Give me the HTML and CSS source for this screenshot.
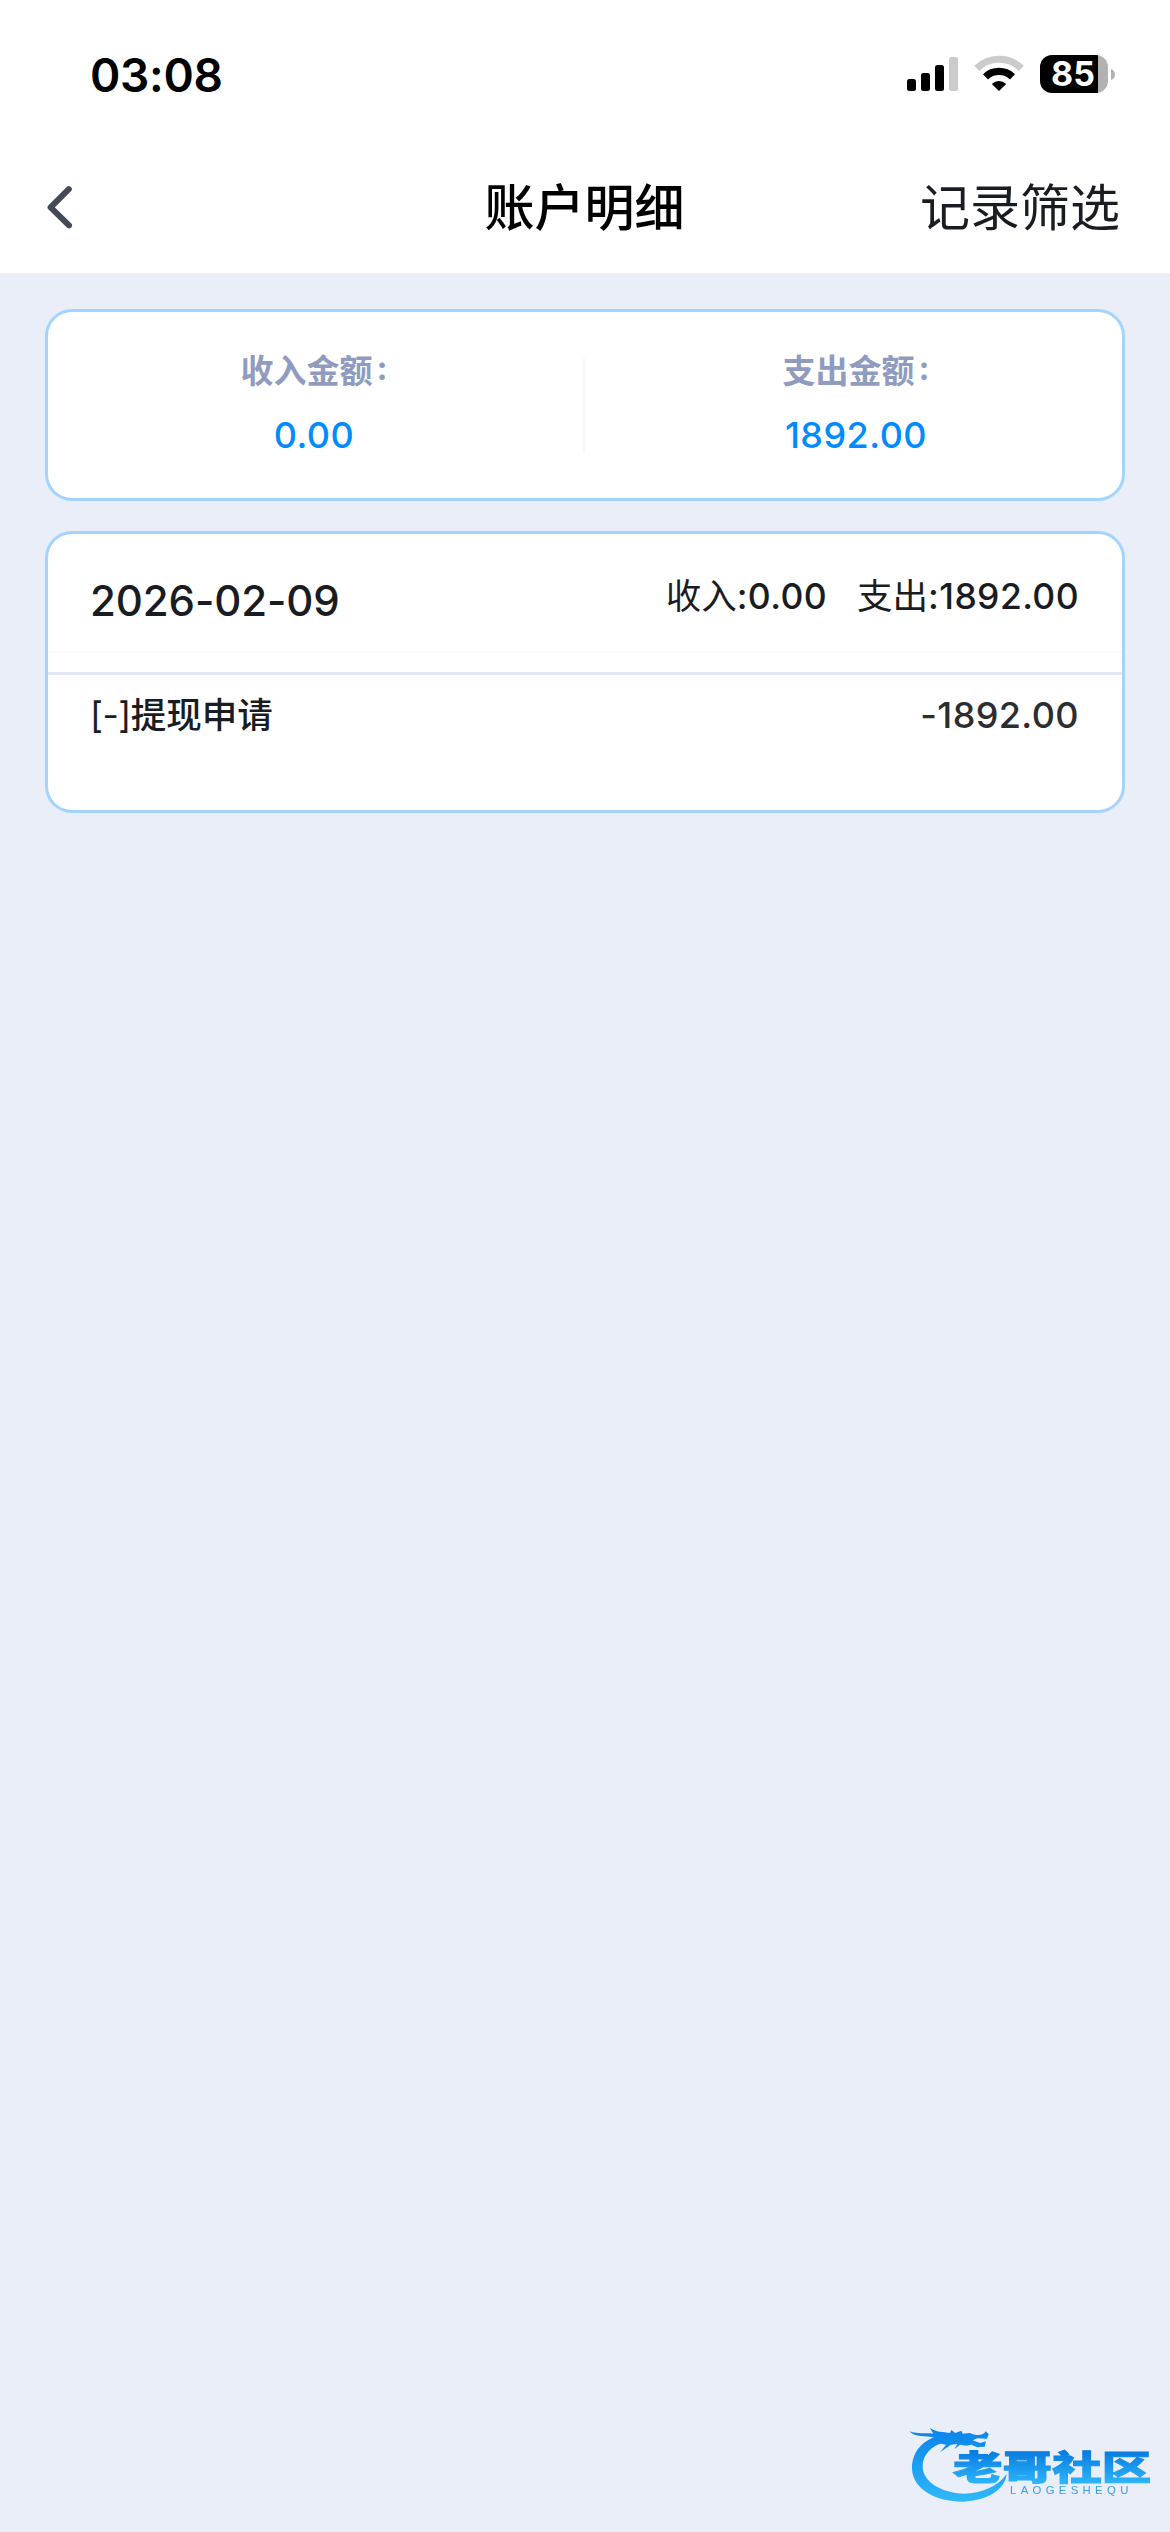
FILE: index.html
```html
<!DOCTYPE html>
<html lang="zh-CN">
<head>
<meta charset="utf-8">
<title>账户明细</title>
<link rel="stylesheet" href="styles.css">
</head>
<body>
<div class="status-bar">
  <span class="clock">03:08</span>
  <div class="status-icons">
    <svg width="52" height="36" viewBox="0 0 52 36">
      <rect x="0" y="24" width="9" height="12" rx="2.5"/>
      <rect x="14" y="18" width="9" height="18" rx="2.5"/>
      <rect x="28" y="10" width="9" height="26" rx="2.5"/>
      <rect x="42" y="2" width="9" height="34" rx="2.5" fill="#cbcbcb"/>
    </svg>
    <svg class="wifi" width="50" height="36" viewBox="-25 -36 50 36">
      <path d="M-22.3 -22.6A31.8 31.8 0 0 1 22.3 -22.6" fill="none" stroke="#cbcbcb" stroke-width="7.2"/>
      <path d="M-13.5 -14.2A19.6 19.6 0 0 1 13.5 -14.2" fill="none" stroke="#000" stroke-width="7.2"/>
      <path d="M0 0L-7.2 -7A10.4 10.4 0 0 1 7.2 -7Z"/>
    </svg>
    <div class="battery">
      <span class="battery-level">85</span>
      <svg class="battery-cap" width="4" height="11" viewBox="0 0 4 11"><path d="M0 0Q4 1.5 4 5.5T0 11Z" fill="#b2b2b2"/></svg>
    </div>
  </div>
</div>
<header class="nav">
  <svg class="back" width="30" height="48" viewBox="0 0 30 48"><path d="M23.8 5.2L5.6 23.4L24 41.3" fill="none" stroke="#434956" stroke-width="6" stroke-linecap="round" stroke-linejoin="round"/></svg>
  <h1 class="title">账户明细</h1>
  <span class="filter">记录筛选</span>
</header>
<main class="content">
  <section class="card summary">
    <div class="cell"><span class="label">收入金额<span class="colon">:</span></span><span class="amount">0.00</span></div>
    <div class="divider"></div>
    <div class="cell"><span class="label">支出金额<span class="colon">:</span></span><span class="amount">1892.00</span></div>
  </section>
  <section class="card day">
    <div class="day-head">
      <span class="date">2026-02-09</span>
      <div class="totals"><span>收入<span class="num">:0.00</span></span><span>支出<span class="num">:1892.00</span></span></div>
    </div>
    <div class="entry">
      <span class="entry-name"><span class="mark">[-]</span>提现申请</span>
      <span class="entry-amount num">-1892.00</span>
    </div>
  </section>
</main>
<svg class="watermark" width="280" height="132" viewBox="0 0 840 396">
  <defs>
    <linearGradient id="ring" x1="0" y1="90" x2="0" y2="305" gradientUnits="userSpaceOnUse"><stop offset="0" stop-color="#0a84ea"/><stop offset="1" stop-color="#2fb9fb"/></linearGradient>
    <linearGradient id="word" x1="0" y1="-85" x2="0" y2="10" gradientUnits="userSpaceOnUse"><stop offset="0" stop-color="#087be0"/><stop offset="1" stop-color="#2db4fa"/></linearGradient>
  </defs>
  <path fill="url(#ring)" d="M160 105C95 115 64 160 66 208C70 270 140 306 220 305C290 302 345 270 350 222C325 258 275 281 222 281C155 279 98 245 98 200C98 165 122 138 160 128Z"/>
  <path fill="url(#ring)" d="M58 94C85 103 108 98 130 101L119 83C138 97 160 95 180 99L184 90L196 99L214 92L218 101L240 99C260 109 281 107 287 94L296 103L291 116L262 115L248 121L270 129L288 124L284 140L262 142L244 134L230 137L210 134L193 148L202 132L183 134L150 157L168 134L140 128L122 136L135 113C106 106 76 114 58 94Z"/>
  <text class="brand" x="0" y="0" transform="translate(189 239) scale(1.43 1)" fill="url(#word)" stroke="url(#word)" stroke-width="3">老哥社区</text>
  <text class="brand-latin" x="360" y="283" textLength="355" fill="#3a9fe6">LAOGESHEQU</text>
</svg>
</body>
</html>
```
FILE: styles.css
```css
* { box-sizing: border-box; }
body {
  margin: 0;
  width: 1170px;
  height: 2532px;
  position: relative;
  background: #eaeef8;
  color: #191c22;
  font-family: Inter, "Noto Sans CJK SC", sans-serif;
}
.status-bar {
  height: 141px;
  padding: 0 55px 0 90px;
  display: flex;
  justify-content: space-between;
  background: #fff;
}
.clock {
  padding-top: 47px;
  font-size: 46px;
  line-height: 56px;
  font-weight: 600;
  letter-spacing: -0.3px;
  color: #000;
}
.status-icons { display: flex; padding-top: 55px; }
.status-icons svg { display: block; }
.status-icons .wifi { margin-left: 15px; }
.battery { display: flex; align-items: center; gap: 3px; height: 38px; margin-left: 16px; }
.battery-level {
  width: 68px;
  height: 38px;
  padding-left: 11px;
  border-radius: 12px;
  background: linear-gradient(to right, #000 58px, #b2b2b2 58px);
  color: #fff;
  font-size: 34px;
  line-height: 38px;
  font-weight: 700;
}
.nav {
  height: 132px;
  padding: 2px 50px 0 45px;
  display: grid;
  grid-template-columns: 1fr auto 1fr;
  align-items: center;
  background: #fff;
}
.title { margin: 0; padding-left: 4px; font-size: 50px; font-weight: 500; color: #000; line-height: 60px; }
.filter { justify-self: end; font-size: 50px; line-height: 60px; }
.content { padding: 36px 45px; display: flex; flex-direction: column; gap: 30px; }
.card { background: #fff; border: 3px solid #a2d4ff; border-radius: 27px; }
.summary { height: 192px; display: flex; padding-top: 45px; }
.cell { flex: 1; display: flex; flex-direction: column; align-items: center; }
.cell:first-child { padding-right: 3px; }
.cell:last-child { padding-left: 5px; }
.label { font-size: 33px; line-height: 33px; font-weight: 700; color: #8f9cc0; margin-top: -2px; }
.colon { position: relative; top: -3px; margin-left: 4px; }
.amount { margin-top: 29px; font-size: 36px; line-height: 36px; font-weight: 500; letter-spacing: 0.45px; color: #008bff; }
.divider { width: 2px; height: 96px; background: #f8f8f8; }
.day { height: 282px; }
.day-head {
  height: 119px;
  padding: 0 43px 0 42px;
  display: flex;
  justify-content: space-between;
  border-bottom: 2px solid #fafafa;
}
.date { padding-top: 42px; font-size: 42px; line-height: 50px; font-weight: 500; letter-spacing: -0.1px; }
.totals { display: flex; gap: 30px; padding-top: 42px; font-size: 35.5px; line-height: 42px; }
.num { font-weight: 500; letter-spacing: 0.4px; }
.entry {
  margin-top: 19px;
  padding: 19px 43px 0 42px;
  display: flex;
  justify-content: space-between;
  border-top: 3px solid #e4e8f4;
  font-size: 36px;
  line-height: 42px;
}
.entry-name { padding-top: 1px; font-size: 35.5px; font-weight: 500; }
.mark { font-weight: 400; letter-spacing: -0.5px; }
.entry-amount { color: #2b2d31; }
.watermark { position: absolute; right: 0; bottom: 0; filter: blur(0.5px); }
.brand { font-family: "Noto Sans CJK SC", sans-serif; font-size: 104px; font-weight: 900; }
.brand-latin { font-family: "Liberation Sans", sans-serif; font-size: 34px; font-weight: 400; }
```
